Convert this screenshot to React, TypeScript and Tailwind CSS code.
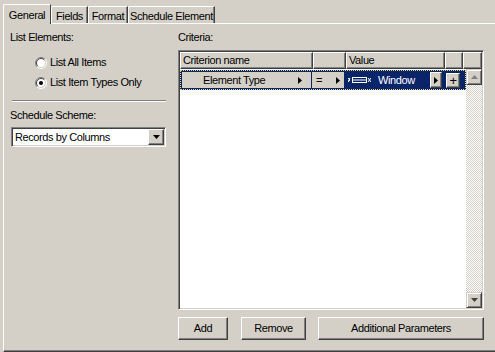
import React from 'react'

const raised =
  'border border-t-white border-l-white border-r-[#404040] border-b-[#404040] shadow-[inset_-1px_-1px_#808080]'
const sunken =
  'border border-t-[#808080] border-l-[#808080] border-r-white border-b-white shadow-[inset_1px_1px_#404040,inset_-1px_-1px_#d4d0c8] p-[1px]'

const Radio = ({ checked }: { checked?: boolean }) => (
  <svg width="12" height="12" viewBox="0 0 12 12">
    <circle cx="6" cy="6" r="5" fill="#fff" />
    <path d="M2.1 9.9 A5.5 5.5 0 0 1 9.9 2.1" stroke="#808080" fill="none" />
    <path d="M9.9 2.1 A5.5 5.5 0 0 1 2.1 9.9" stroke="#fff" fill="none" />
    <path d="M2.8 9.2 A4.5 4.5 0 0 1 9.2 2.8" stroke="#404040" fill="none" />
    <path d="M9.2 2.8 A4.5 4.5 0 0 1 2.8 9.2" stroke="#d4d0c8" fill="none" />
    {checked && <circle cx="6" cy="6" r="2" fill="#000" />}
  </svg>
)

const ArrowRight = ({ color = '#000' }: { color?: string }) => (
  <svg width="4" height="7" viewBox="0 0 4 7">
    <path d="M0 0 L4 3.5 L0 7 Z" fill={color} />
  </svg>
)

const ArrowDown = ({ color = '#000' }: { color?: string }) => (
  <svg width="7" height="4" viewBox="0 0 7 4">
    <path d="M0 0 L7 0 L3.5 4 Z" fill={color} />
  </svg>
)

const ArrowUp = ({ color = '#000' }: { color?: string }) => (
  <svg width="7" height="4" viewBox="0 0 7 4">
    <path d="M0 4 L7 4 L3.5 0 Z" fill={color} />
  </svg>
)

const tabs = [
  { label: 'Fields', w: 'w-[37px]' },
  { label: 'Format', w: 'w-[40px]' },
  { label: 'Schedule Element', w: 'w-[87px]' },
]

export default function App() {
  return (
    <div className="w-[495px] h-[352px] bg-[#d4d0c8] font-['Liberation_Sans',sans-serif] text-[11px] leading-[13px] tracking-[-0.4px] text-black flex flex-col overflow-hidden">
      {/* Tabs */}
      <div className="h-[23px] flex items-end pl-[3px] relative z-10">
        <div className="h-[20px] w-[48px] -mb-[1px] bg-[#d4d0c8] border-t border-l border-white border-r border-r-[#404040] rounded-tl-[2px] flex items-start justify-center pt-[4px]">
          General
        </div>
        {tabs.map((t) => (
          <div
            key={t.label}
            className={`h-[17px] ${t.w} border-t border-l border-white border-r border-r-[#404040] shadow-[inset_-1px_0_#808080] rounded-tl-[2px] flex items-start justify-center pt-[3px]`}
          >
            {t.label}
          </div>
        ))}
      </div>

      {/* Panel */}
      <div className="flex-1 ml-[3px] border-t border-l border-white border-b border-b-[#404040] shadow-[inset_0_-1px_#808080] flex">
        {/* Left column */}
        <div className="w-[174px] pl-[6px] pt-[7px] flex flex-col">
          <div>List Elements:</div>
          <div className="flex flex-col gap-[7px] mt-[12px] ml-[25px]">
            <div className="flex items-center gap-[3px] h-[13px]">
              <Radio />
              <span>List All Items</span>
            </div>
            <div className="flex items-center gap-[3px] h-[13px]">
              <Radio checked />
              <span>List Item Types Only</span>
            </div>
          </div>
          <div className="mt-[11px] ml-[2px] w-[154px] border-t border-[#808080] border-b border-b-white" />
          <div className="mt-[7px]">Schedule Scheme:</div>
          <div className={`mt-[5px] ml-[1px] w-[155px] h-[20px] bg-white flex items-center ${sunken}`}>
            <div className="flex-1 pl-[2px] bg-white">Records by Columns</div>
            <div className={`w-[16px] h-[16px] bg-[#d4d0c8] flex items-center justify-center ${raised}`}>
              <ArrowDown />
            </div>
          </div>
        </div>

        {/* Right column */}
        <div className="w-[306px] pt-[7px] flex flex-col">
          <div>Criteria:</div>
          <div className={`mt-[6px] h-[260px] bg-white flex flex-col ${sunken}`}>
            {/* Header */}
            <div className="h-[17px] flex bg-[#d4d0c8]">
              <div className={`w-[133px] pl-[2px] flex items-center ${raised}`}>Criterion name</div>
              <div className={`w-[33px] ${raised}`} />
              <div className={`w-[99px] pl-[2px] flex items-center ${raised}`}>Value</div>
              <div className={`w-[18px] ${raised}`} />
              <div className={`w-[19px] ${raised}`} />
            </div>
            {/* Body */}
            <div className="flex-1 flex bg-white">
              <div className="flex-1 pt-[1px]">
                <div className="h-[20px] bg-[#0a246a] border border-dotted border-[#e8d878] flex gap-[1px] p-[1px]">
                  <div className="w-[129px] bg-[#d4d0c8] flex items-center pl-[21px] pr-[9px]">
                    <span className="flex-1">Element Type</span>
                    <ArrowRight />
                  </div>
                  <div className="w-[32px] bg-[#d4d0c8] flex items-center pl-[4px] pr-[4px]">
                    <span className="flex-1">=</span>
                    <ArrowRight />
                  </div>
                  <div className="w-[98px] flex items-center pl-[3px] text-white">
                    <svg width="23" height="6" viewBox="0 0 23 6" className="mr-[7px]">
                      <path d="M0 1 L2 3 L0 5 M2 1 L0 5" stroke="#fff" strokeWidth="1" fill="none" />
                      <rect x="4.5" y="0.5" width="14" height="5" fill="none" stroke="#fff" />
                      <rect x="5" y="2.5" width="13" height="1" fill="#fff" />
                      <path d="M20 1 L23 5 M23 1 L20 5" stroke="#fff" strokeWidth="1" fill="none" />
                    </svg>
                    <span className="flex-1">Window</span>
                    <div className={`w-[12px] h-[16px] bg-[#d4d0c8] flex items-center justify-center mr-[1px] ${raised}`}>
                      <ArrowRight />
                    </div>
                  </div>
                  <div className="flex-1 flex items-center pl-[2px]">
                    <div className={`w-[14px] h-[15px] bg-[#d4d0c8] flex items-center justify-center text-[13px] leading-none ${raised}`}>
                      +
                    </div>
                  </div>
                </div>
              </div>
              {/* Scrollbar */}
              <div className="w-[16px] flex flex-col">
                <div className="h-[16px] bg-[#d4d0c8] border border-t-[#d4d0c8] border-l-[#d4d0c8] border-r-[#404040] border-b-[#404040] shadow-[inset_1px_1px_white,inset_-1px_-1px_#808080] flex items-center justify-center">
                  <ArrowUp color="#808080" />
                </div>
                <div className="flex-1 bg-[repeating-conic-gradient(#d4d0c8_0_25%,#ffffff_0_50%)] bg-[length:2px_2px]" />
                <div className="h-[16px] bg-[#d4d0c8] border border-t-[#d4d0c8] border-l-[#d4d0c8] border-r-[#404040] border-b-[#404040] shadow-[inset_1px_1px_white,inset_-1px_-1px_#808080] flex items-center justify-center">
                  <ArrowDown color="#404040" />
                </div>
              </div>
            </div>
          </div>
          {/* Buttons */}
          <div className="mt-[7px] flex">
            <div className={`w-[50px] h-[23px] flex items-center justify-center ${raised}`}>Add</div>
            <div className={`ml-[13px] w-[65px] h-[23px] flex items-center justify-center ${raised}`}>Remove</div>
            <div className={`ml-[12px] w-[166px] h-[23px] flex items-center justify-center ${raised}`}>
              Additional Parameters
            </div>
          </div>
        </div>
      </div>
    </div>
  )
}
